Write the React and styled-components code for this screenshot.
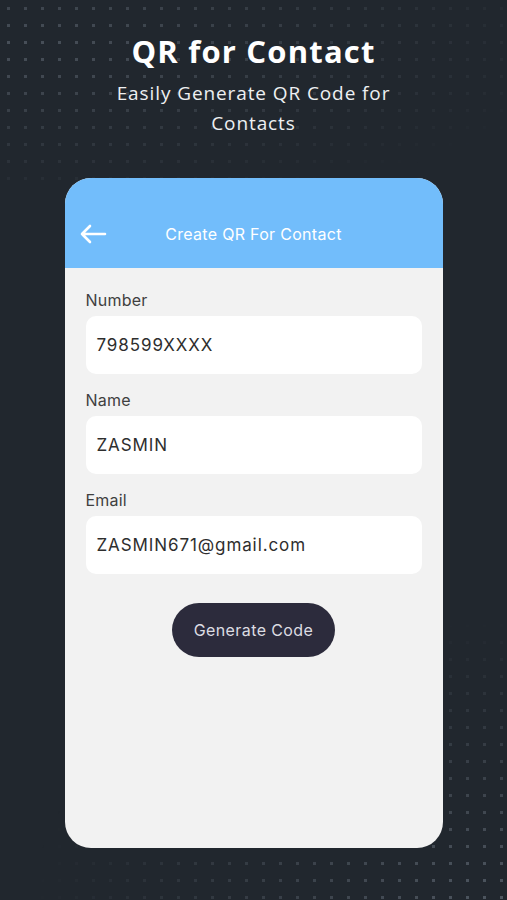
import React from 'react';
import styled, { createGlobalStyle } from 'styled-components';

const GlobalStyle = createGlobalStyle`
  html, body {
    margin: 0;
    padding: 0;
    background: #21272e;
  }
`;

const fields = [
  { label: 'Number', value: '798599XXXX' },
  { label: 'Name', value: 'ZASMIN' },
  { label: 'Email', value: 'ZASMIN671@gmail.com' },
];

function BackArrow() {
  return (
    <svg width="28" height="20" viewBox="0 0 28 20" fill="none">
      <path
        d="M26 10H3M11 2L3 10L11 18"
        stroke="#fff"
        strokeWidth="2.6"
        strokeLinecap="round"
        strokeLinejoin="round"
      />
    </svg>
  );
}

function App() {
  return (
    <Page>
      <GlobalStyle />
      <Hero>
        <Title>QR for Contact</Title>
        <Subtitle>
          Easily Generate QR Code for
          <br />
          Contacts
        </Subtitle>
      </Hero>
      <Card>
        <CardHeader>
          <BackButton>
            <BackArrow />
          </BackButton>
          <HeaderTitle>Create QR For Contact</HeaderTitle>
        </CardHeader>
        <Form>
          {fields.map(f => (
            <Field key={f.label}>
              <Label>{f.label}</Label>
              <Input>{f.value}</Input>
            </Field>
          ))}
          <ButtonRow>
            <GenerateButton>Generate Code</GenerateButton>
          </ButtonRow>
        </Form>
      </Card>
    </Page>
  );
}

const Page = styled.div`
  position: relative;
  height: 900px;
  overflow: hidden;
  background: #21272e;
  display: flex;
  flex-direction: column;
  align-items: center;

  &::before,
  &::after {
    content: '';
    position: absolute;
    pointer-events: none;
    background-image: radial-gradient(circle, #4f5761 1.5px, transparent 2px);
    background-size: 17px 17px;
  }

  &::before {
    left: 0;
    top: 0;
    width: 507px;
    height: 185px;
    -webkit-mask-image: radial-gradient(ellipse 140% 110% at 5% 25%, rgba(0,0,0,0.85), transparent 80%);
    mask-image: radial-gradient(ellipse 140% 110% at 5% 25%, rgba(0,0,0,0.85), transparent 80%);
  }

  &::after {
    right: 0;
    bottom: 0;
    width: 507px;
    height: 300px;
    -webkit-mask-image: radial-gradient(ellipse 110% 110% at 100% 100%, rgba(0,0,0,1), transparent 85%);
    mask-image: radial-gradient(ellipse 110% 110% at 100% 100%, rgba(0,0,0,1), transparent 85%);
  }
`;

const Hero = styled.header`
  position: relative;
  z-index: 1;
  padding-top: 33px;
  text-align: center;
  color: #fff;
  font-family: 'Open Sans', 'Liberation Sans', sans-serif;
`;

const Title = styled.h1`
  margin: 0;
  font-size: 31px;
  line-height: 36px;
  font-weight: 700;
  letter-spacing: 1.2px;
`;

const Subtitle = styled.p`
  margin: 9px 0 0;
  font-size: 19px;
  line-height: 30px;
  font-weight: 400;
  letter-spacing: 0.9px;
  color: #eef0f2;
`;

const Card = styled.section`
  position: relative;
  z-index: 1;
  margin-top: 40px;
  width: 378px;
  height: 670px;
  border-radius: 26px;
  overflow: hidden;
  background: #f2f2f2;
  font-family: Inter, 'Liberation Sans', sans-serif;
`;

const CardHeader = styled.div`
  height: 90px;
  box-sizing: border-box;
  background: #72bdfb;
  display: flex;
  align-items: flex-end;
  padding: 0 0 23px 14px;
  position: relative;
`;

const BackButton = styled.div`
  display: flex;
  align-items: center;
  height: 22px;
`;

const HeaderTitle = styled.div`
  position: absolute;
  left: 0;
  right: 0;
  bottom: 23px;
  text-align: center;
  color: #fff;
  font-size: 16px;
  line-height: 22px;
  letter-spacing: 0.3px;
  pointer-events: none;
`;

const Form = styled.div`
  padding: 22px 21px 0;
  display: flex;
  flex-direction: column;
  gap: 16px;
`;

const Field = styled.div`
  display: flex;
  flex-direction: column;
  gap: 6px;
`;

const Label = styled.label`
  font-size: 16px;
  line-height: 20px;
  color: #3f3f3f;
  letter-spacing: 0.2px;
`;

const Input = styled.div`
  height: 58px;
  box-sizing: border-box;
  background: #fff;
  border-radius: 10px;
  display: flex;
  align-items: center;
  padding: 0 11px;
  font-size: 17px;
  letter-spacing: 0.9px;
  color: #2e2e2e;
`;

const ButtonRow = styled.div`
  display: flex;
  justify-content: center;
  margin-top: 13px;
`;

const GenerateButton = styled.button`
  width: 163px;
  height: 54px;
  border: none;
  border-radius: 27px;
  background: #2c2b3c;
  color: #dcdce2;
  font-family: Inter, 'Liberation Sans', sans-serif;
  font-size: 16px;
  letter-spacing: 0.4px;
`;

export default App;
